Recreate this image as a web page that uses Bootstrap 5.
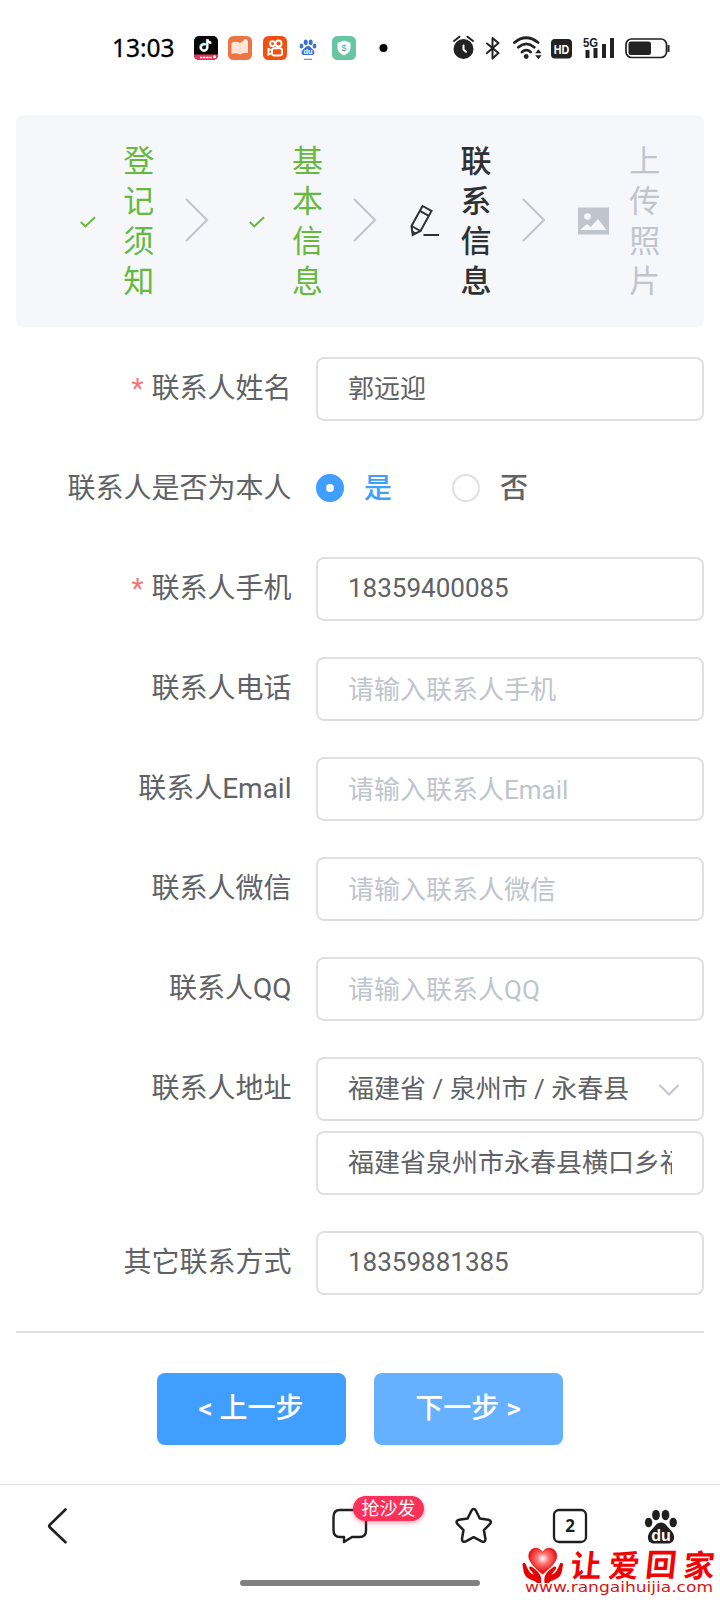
<!DOCTYPE html>
<html lang="zh-CN">
<head>
<meta charset="utf-8">
<meta name="viewport" content="width=device-width, initial-scale=1">
<title>联系信息</title>
<link href="https://cdn.jsdelivr.net/npm/bootstrap@5.3.0/dist/css/bootstrap.min.css" rel="stylesheet">
<style>
body{width:720px;height:1600px;overflow:hidden;background:#fff;font-family:Roboto,"Noto Sans CJK SC",sans-serif;color:#606266}
svg{display:block;flex:none}
.status-bar{height:96px;padding:0 50px 0 112px}
.status-left{gap:10.6px}
.status-right{gap:9px}
.clock{width:71px;font:400 24.5px/30px "Noto Sans",sans-serif;color:#000;-webkit-text-stroke:.3px #000;white-space:nowrap}
.step-panel{margin:19px 16px 0;height:212px;padding-left:56px;background:#f5f7fa;border-radius:8px}
.step-item{height:160px;color:#67b93e}
.step-title{width:32px;margin-left:18.700px;padding-top:2px;font-size:31px;line-height:40px;text-align:center;word-break:break-all}
.step-arrow{margin:-2px 31px 0 29px}
.step-now{color:#303133;font-weight:500}
.step-wait{color:#c0c4cc}
.form-area{margin:30px 16px 0}
.field{min-height:64px;margin-bottom:36px}
.field-label{width:275.500px;flex:none;text-align:right;font-size:28px;line-height:64px;white-space:nowrap}
.need{color:#f07878;margin-right:8px}
.field-body{width:388px;margin-left:24.500px}
.field-body .form-control{height:64px;border:2px solid #dfe0e3;border-radius:8px;padding:0 30px 2px;font-size:26px;line-height:60px;color:#606266;background-color:#fff}
.field-body .form-control::placeholder{color:#c0c4cc;opacity:1}
.field-body .form-control:placeholder-shown{padding:1px 30px 0}
.field-body .form-control.hanzi{padding-bottom:5px}
.field-body .form-control+.form-control{margin-top:10px}
.drop-mark{right:21px;top:23px}
.radio-text{font-size:28px;line-height:64px;font-weight:500}
.radio-text.on{color:#409eff}
.pick-dot{width:28px;height:28px;margin-top:-3px;border:2px solid #dfe0e3;background:#fff}
.pick-dot.on{border:10px solid #409eff}
.pick-gap{margin-left:60px}
.rule{height:2px;background:#dfe0e3}
.actions{margin-top:40px;gap:28px;padding-left:141px}
.btn-step{width:189px;height:72px;border:0;border-radius:8px;background:#409eff;color:#fff;font-size:28px;font-weight:500;padding:0 1px 0 0}
.btn-step.next{background:#66b1ff}
.tool-bar{margin-top:39px;height:116px;border-top:1px solid #e2e2e2;display:grid;grid-template-columns:286px 120px 98px 92px 1fr;padding:21px 0 0 46px;align-items:start}
.sofa{left:21px;top:-10px;width:71px;height:25px;border-radius:13px;background:#fb3159;color:#fff;font-size:18px;line-height:25px;text-align:center;box-shadow:0 2px 5px #fb315970;white-space:nowrap}
.home-line{left:240px;bottom:14px;width:240px;height:6px;border-radius:3px;background:#808080}
.site-mark{left:516px;bottom:0}
</style>
</head>
<body class="position-relative">
<header class="status-bar d-flex align-items-center justify-content-between">
  <div class="status-left d-flex align-items-center">
    <span class="clock">13:03</span>
    <svg width="24" height="24" viewBox="0 0 24 24"><defs><clipPath id="app"><rect width="24" height="24" rx="5"/></clipPath></defs><g clip-path="url(#app)"><path fill="#080808" d="M0 0h24v24H0z"/><path fill="#e9335c" d="M0 18.500h24V24H0z"/></g><g fill="none" stroke-width="2.200"><path stroke="#39c6cc" d="M11.300 8.200a3.400 3.400 0 1 0 1.700 3V3.200c.4 2.100 1.800 3.200 4 3.400"/><path stroke="#fff" d="M11.800 8.700a3.200 3.200 0 1 0 1.600 2.800V3.400c.4 2.100 1.800 3.200 4 3.400"/></g><path d="M6 21.500h12.500" stroke="#fff" stroke-width="1.600" stroke-dasharray="2.400 .7"/><circle cx="20.500" cy="20.800" r="1.500" fill="#fff"/></svg>
    <svg width="24" height="24" viewBox="0 0 24 24"><rect width="24" height="24" rx="5.500" fill="#ee7444"/><path d="M3.500 6.800Q8 4.500 12 7q4-3.500 8-1.500V17q-4-1-8 1.500Q8 16.500 3.500 18z" fill="#fde5d8"/><path d="M12 7v11" stroke="#f7bda2" stroke-width=".5"/><circle cx="17.500" cy="5" r="2" fill="#fff1e8"/></svg>
    <svg width="24" height="24" viewBox="0 0 24 24"><rect width="24" height="24" rx="5.500" fill="#f15011"/><g fill="none" stroke="#fff" stroke-width="1.900"><circle cx="9.500" cy="7.700" r="2.400"/><circle cx="15.500" cy="7.500" r="3"/><rect x="9" y="12.300" width="10" height="7.200" rx="2.300"/><path d="M9 14.500 5.500 13v5.500L9 17"/></g></svg>
    <svg width="24" height="24" viewBox="0 0 24 24"><g fill="#3d6fd8"><ellipse cx="4.500" cy="10" rx="1.900" ry="2.600"/><ellipse cx="8.700" cy="6.200" rx="2" ry="2.800"/><ellipse cx="13.700" cy="6.200" rx="2" ry="2.800"/><ellipse cx="17.500" cy="10" rx="1.900" ry="2.600"/><path d="M11 10c2.400 0 3 2 4.600 3.200 3.200 2.600 2 6-1.200 5.800H7.600c-3.200.2-4.400-3.200-1.200-5.800C8 12 8.600 10 11 10z"/></g><text x="11" y="18" font-family="Liberation Sans" font-size="7.500" font-weight="700" text-anchor="middle" fill="#fff">du</text><path d="M7 23.300h4.500" stroke="#e24848"/><path d="M11.500 23.300H15" stroke="#4e64c8"/></svg>
    <svg width="24" height="24" viewBox="0 0 24 24"><rect width="24" height="24" rx="5.500" fill="#66c6a2"/><path d="M12 4.500 18.500 6.700V12c0 3.500-3 5.700-6.500 7.500C8.500 17.700 5.500 15.500 5.500 12V6.700z" fill="#fff"/><text x="12" y="15" font-family="Liberation Sans" font-size="9" text-anchor="middle" fill="#68a58e">$</text></svg>
    <svg width="26" height="24" viewBox="0 0 26 24"><circle cx="16.500" cy="12" r="4" fill="#000"/></svg>
  </div>
  <div class="status-right d-flex align-items-center">
    <svg width="24" height="30" viewBox="452 33 24 30"><circle cx="463.500" cy="49" r="10" fill="#222"/><path d="m454 41 5.500-4.300M473 41l-5.500-4.300" stroke="#222" stroke-width="2" stroke-linecap="round"/><path d="M463.500 45.500v4l2.500 2.300" fill="none" stroke="#fff" stroke-width="2" stroke-linecap="round"/></svg>
    <svg width="16" height="30" viewBox="485 33 16 30"><path d="m487 43.500 11.500 9.500-6 5.500V38l6 5-11.500 10" fill="none" stroke="#222" stroke-width="2" stroke-linejoin="round" stroke-linecap="round"/></svg>
    <svg width="32" height="30" viewBox="510 33 32 30"><g fill="none" stroke="#222" stroke-width="2.800" stroke-linecap="round"><path d="M514.500 42.500q11.500-9.500 23.500 0"/><path d="M518.300 47.200q8-6.700 16 0"/><path d="M522 52q4.300-3.800 8.600 0"/></g><circle cx="526.200" cy="56.500" r="2.400" fill="#222"/><path d="m535.200 53.200 3.200-4 3.200 4zM535.200 55.300l3.200 4 3.200-4z" fill="#222"/></svg>
    <svg width="21" height="30" viewBox="551 33 21 30"><rect x="551" y="39" width="21" height="19.500" rx="4" fill="#222"/><text x="561.500" y="53.500" font-family="Liberation Sans" font-size="13" font-weight="700" text-anchor="middle" textLength="15.500" lengthAdjust="spacingAndGlyphs" fill="#fff">HD</text></svg>
    <svg width="35" height="30" viewBox="581 33 35 30"><text x="583" y="47" font-family="Liberation Sans" font-size="13" font-weight="700" fill="#222" textLength="15" lengthAdjust="spacingAndGlyphs">5G</text><path d="M587.500 50v8M595.500 48v10M604 44v14M612 38v20" stroke="#222" stroke-width="4"/></svg>
    <svg width="45" height="30" viewBox="625 33 45 30"><rect x="626" y="39" width="40.500" height="18.500" rx="5.500" fill="none" stroke="#222" stroke-width="1.700"/><rect x="628.500" y="41.500" width="22.500" height="13.500" rx="2.500" fill="#222"/><path d="M668.500 45v7" stroke="#222" stroke-width="2"/></svg>
  </div>
</header>

<nav class="step-panel d-flex align-items-center">
  <div class="step-item d-flex align-items-center">
    <svg width="32" height="32" viewBox="0 0 32 32"><path d="m8.800 17 4.500 4.400 9.700-9.200" fill="none" stroke="currentColor" stroke-width="2"/></svg>
    <div class="step-title">登记须知</div>
    <svg class="step-arrow" width="26" height="48" viewBox="0 0 26 48"><path d="m2 3 21 21L2 45" fill="none" stroke="#c0c4cc" stroke-width="2"/></svg>
  </div>
  <div class="step-item d-flex align-items-center">
    <svg width="32" height="32" viewBox="0 0 32 32"><path d="m8.800 17 4.500 4.400 9.700-9.200" fill="none" stroke="currentColor" stroke-width="2"/></svg>
    <div class="step-title">基本信息</div>
    <svg class="step-arrow" width="26" height="48" viewBox="0 0 26 48"><path d="m2 3 21 21L2 45" fill="none" stroke="#c0c4cc" stroke-width="2"/></svg>
  </div>
  <div class="step-item step-now d-flex align-items-center">
    <svg width="32" height="34" viewBox="0 0 32 34"><path d="M13.500 2 22.500 7 11.500 27 3.700 31 2.500 22zM10.900 6.800l8.900 5M2.500 22l9 5" fill="none" stroke="currentColor" stroke-width="2"/><path d="m3.500 27 3.200 2-3.200 2z" fill="currentColor" stroke="currentColor"/><path d="M14.500 31H30" stroke="currentColor" stroke-width="2"/></svg>
    <div class="step-title">联系信息</div>
    <svg class="step-arrow" width="26" height="48" viewBox="0 0 26 48"><path d="m2 3 21 21L2 45" fill="none" stroke="#c0c4cc" stroke-width="2"/></svg>
  </div>
  <div class="step-item step-wait d-flex align-items-center">
    <svg width="32" height="28" viewBox="1 0 32 28"><path d="M0 .5h32v27H0z" fill="#c0c4cc"/><circle cx="10.500" cy="9.500" r="3.300" fill="#f5f7fa"/><path d="m3 23 7-6 3.500 3L21 12l8.500 11z" fill="#f5f7fa"/></svg>
    <div class="step-title">上传照片</div>
  </div>
</nav>

<main class="form-area">
  <div class="field d-flex"><label class="field-label" for="f1"><span class="need">*</span>联系人姓名</label><div class="field-body"><input id="f1" class="form-control hanzi" value="郭远迎"></div></div>
  <div class="field d-flex"><span class="field-label">联系人是否为本人</span>
    <div class="field-body d-flex align-items-center" role="radiogroup">
      <span class="pick-dot on rounded-circle" role="radio" aria-checked="true"></span><span class="radio-text on ms-3 ps-1">是</span>
      <span class="pick-dot pick-gap rounded-circle" role="radio" aria-checked="false"></span><span class="radio-text ms-3 ps-1">否</span>
    </div></div>
  <div class="field d-flex"><label class="field-label" for="f2"><span class="need">*</span>联系人手机</label><div class="field-body"><input id="f2" class="form-control" value="18359400085"></div></div>
  <div class="field d-flex"><label class="field-label" for="f3">联系人电话</label><div class="field-body"><input id="f3" class="form-control" placeholder="请输入联系人手机"></div></div>
  <div class="field d-flex"><label class="field-label" for="f4">联系人Email</label><div class="field-body"><input id="f4" class="form-control" placeholder="请输入联系人Email"></div></div>
  <div class="field d-flex"><label class="field-label" for="f5">联系人微信</label><div class="field-body"><input id="f5" class="form-control" placeholder="请输入联系人微信"></div></div>
  <div class="field d-flex"><label class="field-label" for="f6">联系人QQ</label><div class="field-body"><input id="f6" class="form-control" placeholder="请输入联系人QQ"></div></div>
  <div class="field d-flex"><label class="field-label" for="f7">联系人地址</label>
    <div class="field-body position-relative">
      <input id="f7" class="form-control hanzi" value="福建省 / 泉州市 / 永春县">
      <input class="form-control hanzi" value="福建省泉州市永春县横口乡福中村">
      <svg class="drop-mark position-absolute" width="28" height="20" viewBox="0 0 28 20"><path d="m4.500 5 9.500 9.500L23.500 5" fill="none" stroke="#c0c4cc" stroke-width="2"/></svg>
    </div></div>
  <div class="field d-flex"><label class="field-label" for="f8">其它联系方式</label><div class="field-body"><input id="f8" class="form-control" value="18359881385"></div></div>
  <div class="rule"></div>
  <div class="actions d-flex">
    <button class="btn btn-step">&lt; 上一步</button>
    <button class="btn btn-step next">下一步 &gt;</button>
  </div>
</main>

<footer class="tool-bar">
  <svg width="30" height="40" viewBox="46 1506 30 40"><path d="m65.500 1509.500-15.700 15.300a1.800 1.800 0 0 0 0 2.500l15.700 15" fill="none" stroke="#1f1f1f" stroke-width="2.600" stroke-linecap="round"/></svg>
  <div class="position-relative">
    <svg width="40" height="40" viewBox="332 1506 40 40"><path d="M340 1510h19.500q6.500 0 6.500 6v15q0 6-6.500 6H352l-8 5V1537h-4q-6.500 0-6.500-7v-13q0-7 6.500-7z" fill="none" stroke="#1f1f1f" stroke-width="2.400" stroke-linejoin="round"/></svg>
    <span class="sofa position-absolute">抢沙发</span>
  </div>
  <svg width="44" height="40" viewBox="452 1506 44 40"><path d="M471.300 1511q2.400-3.800 4.800 0l3.700 7.500 8.500 1.300q4.200 1.200 1.500 4.400l-5.900 6 1.500 8.500q.2 4.300-3.800 2.600l-7.900-4.100-7.900 4.100q-4 1.700-3.800-2.600l1.500-8.500-5.900-6q-2.700-3.200 1.500-4.400l8.500-1.300z" fill="none" stroke="#1f1f1f" stroke-width="2.500" stroke-linejoin="round"/></svg>
  <svg width="40" height="40" viewBox="550 1506 40 40"><rect x="554" y="1510" width="32" height="32" rx="5" fill="none" stroke="#1f1f1f" stroke-width="2.300"/><text x="570" y="1532" font-family="Noto Sans" font-size="17" font-weight="700" text-anchor="middle" fill="#1f1f1f">2</text></svg>
  <svg width="40" height="40" viewBox="642 1506 40 40"><g fill="#1f1f1f"><ellipse cx="648.600" cy="1522.500" rx="3.700" ry="4.800"/><ellipse cx="656" cy="1515" rx="3.900" ry="5.200"/><ellipse cx="665.500" cy="1515" rx="3.900" ry="5.200"/><ellipse cx="673.200" cy="1522.500" rx="3.700" ry="4.800"/><path d="M661 1522.500c4 0 5.500 3.200 8.500 6.300 8 7.500 4.500 14.700-2 14.700h-13c-6.500 0-10-7.200-2-14.700 3-3.100 4.500-6.300 8.500-6.300z"/></g><text x="661" y="1540.500" font-family="Liberation Sans" font-size="16" font-weight="700" text-anchor="middle" fill="#fff">du</text></svg>
</footer>

<div class="home-line position-absolute"></div>
<svg class="site-mark position-absolute" width="204" height="60" viewBox="516 1540 204 60">
  <defs><radialGradient id="glow" cx=".5" cy=".4" r=".6"><stop offset="0" stop-color="#fff"/><stop offset=".35" stop-color="#f77"/><stop offset=".9" stop-color="#e80a0a"/></radialGradient></defs>
  <path d="M542.500 1574q-10-8-13-14.500c-3.500-10 8-15.500 13-7 5-8.500 17-3 13.500 7q-3 6.500-13.500 14.500z" fill="url(#glow)" stroke="#e00" stroke-width=".8"/>
  <g fill="#e60000"><path d="M541 1583c1-8-2-11-9-16-2-1.500-4 .5-2 2.500l4 5c-3 0-6-4-8-10-1-3-4-2-3.500.5 1 5 1 9 4 12 5 4 8 3 10.500 6z"/><path d="M544.500 1583c-1-8 2-11 9-16 2-1.500 4 .5 2 2.500l-4 5c3 0 6-4 8-10 1-3 4-2 3.500.5-1 5-1 9-4 12-5 4-8 3-10.500 6z"/></g>
  <g font-family="'Noto Sans CJK SC',sans-serif" font-size="31" font-weight="700" fill="#f50000" text-anchor="middle"><text transform="translate(585 1577) skewX(-6)">让</text><text transform="translate(623 1577) skewX(-6)">爱</text><text transform="translate(660 1576) skewX(-6)">回</text><text transform="translate(698 1577) skewX(-6)">家</text></g>
  <text x="525" y="1592" font-family="'DejaVu Sans',sans-serif" font-size="14.500" fill="#d91414" textLength="188" lengthAdjust="spacingAndGlyphs">www.rangaihuijia.com</text>
</svg>
<script src="https://cdn.jsdelivr.net/npm/bootstrap@5.3.0/dist/js/bootstrap.bundle.min.js"></script>
</body>
</html>
